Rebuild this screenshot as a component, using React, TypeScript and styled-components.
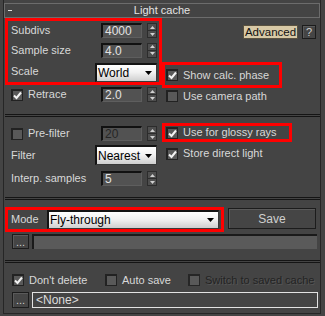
import React from 'react';
import styled, { createGlobalStyle } from 'styled-components';

const GlobalStyle = createGlobalStyle`
  html, body {
    margin: 0;
    padding: 0;
    background: #444444;
  }
  body {
    font-family: "Liberation Sans", Arial, sans-serif;
    font-size: 11px;
    color: #d8d8d8;
  }
`;

const Panel = styled.div`
  box-sizing: border-box;
  margin-left: 3px;
  width: 318px;
  height: 314px;
  padding-top: 3px;
  background: #444444;
  border: 1px solid #262626;
  border-top: none;
`;

const TitleBar = styled.div`
  box-sizing: border-box;
  height: 15px;
  border: 1px solid #6c6c6c;
  display: flex;
  align-items: center;
  padding-left: 3px;
`;

const Collapse = styled.span`
  width: 4px;
  height: 1px;
  background: #e0e0e0;
`;

const Title = styled.span`
  flex: 1;
  text-align: center;
  margin-right: 7px;
  line-height: 13px;
  color: #e4e4e4;
`;

const Section = styled.div`
  display: flex;
`;

const LeftCol = styled.div<{ $pad?: boolean }>`
  width: 157px;
  margin-left: 1px;
  display: flex;
  flex-direction: column;
  box-sizing: border-box;
  padding: ${p => (p.$pad ? '0 5px 0 6px' : '0')};
`;

const RightCol = styled.div`
  flex: 1;
  display: flex;
  flex-direction: column;
`;

const Highlight = styled.div<{ $w?: number; $h: number; $mt?: number; $single?: boolean }>`
  box-sizing: border-box;
  border: 3px solid #ff0000;
  height: ${p => p.$h}px;
  width: ${p => (p.$w ? `${p.$w}px` : 'auto')};
  margin-top: ${p => p.$mt ?? 0}px;
  display: flex;
  flex-direction: column;
  justify-content: ${p => (p.$single ? 'center' : 'flex-start')};
  padding: ${p => (p.$single ? '0 0 0 1px' : '0 2px 0 3px')};
`;

const Row = styled.div<{ $h: number; $mt?: number; $end?: boolean; $pl?: number; $pr?: number }>`
  display: flex;
  align-items: ${p => (p.$end ? 'flex-end' : 'center')};
  height: ${p => p.$h}px;
  margin-top: ${p => p.$mt ?? 0}px;
  padding-left: ${p => p.$pl ?? 0}px;
  padding-right: ${p => p.$pr ?? 0}px;
  flex-shrink: 0;
`;

const Label = styled.span<{ $w?: number }>`
  flex: ${p => (p.$w ? 'none' : 1)};
  width: ${p => (p.$w ? `${p.$w}px` : 'auto')};
  white-space: nowrap;
  line-height: 13px;
  align-self: center;
`;

const NumBox = styled.div<{ $disabled?: boolean }>`
  box-sizing: border-box;
  width: 41px;
  height: 15px;
  background: #525252;
  border-top: 2px solid #111111;
  border-left: 2px solid #111111;
  border-right: 1px solid #5e5e5e;
  border-bottom: 1px solid #5e5e5e;
  padding-left: 2px;
  line-height: 12px;
  color: ${p => (p.$disabled ? '#262626' : '#e2e2e2')};
  font-size: 12px;
`;

const Spinner = styled.div`
  box-sizing: border-box;
  width: 10px;
  height: 15px;
  margin-left: 5px;
  display: flex;
  flex-direction: column;
  background: #4e4e4e;
  border: 1px solid #2c2c2c;
`;

const SpinHalf = styled.div<{ $down?: boolean }>`
  flex: 1;
  display: flex;
  align-items: center;
  justify-content: center;
  border-top: ${p => (p.$down ? '1px solid #2c2c2c' : 'none')};
`;

const Select = styled.div<{ $w?: number; $h: number }>`
  box-sizing: border-box;
  width: ${p => (p.$w ? `${p.$w}px` : 'auto')};
  flex: ${p => (p.$w ? 'none' : 1)};
  height: ${p => p.$h}px;
  background: linear-gradient(#ffffff, #f2f2f2 45%, #cfcfcf);
  border-top: 2px solid #141414;
  border-left: 2px solid #141414;
  border-right: 1px solid #3a3a3a;
  border-bottom: 1px solid #3a3a3a;
  display: flex;
  align-items: center;
  padding: 0 4px 0 1px;
  color: #000;
  font-size: 12px;
`;

const SelectText = styled.span`
  flex: 1;
  white-space: nowrap;
`;

const CheckWrap = styled.label<{ $w?: number }>`
  display: flex;
  align-items: center;
  gap: 5px;
  width: ${p => (p.$w ? `${p.$w}px` : 'auto')};
  flex: none;
  white-space: nowrap;
`;

const Box = styled.span<{ $off?: boolean }>`
  box-sizing: border-box;
  width: 12px;
  height: 12px;
  flex: none;
  background: #595959;
  border: 2px solid ${p => (p.$off ? '#262626' : '#222222')};
  border-right-width: 1px;
  border-bottom-width: 1px;
  display: flex;
  align-items: center;
  justify-content: center;
`;

const CheckText = styled.span<{ $dim?: boolean }>`
  line-height: 13px;
  color: ${p => (p.$dim ? '#232323' : '#d8d8d8')};
  text-shadow: ${p => (p.$dim ? '1px 1px 0 #555555' : 'none')};
`;

const ButtonRow = styled.div`
  display: flex;
  justify-content: flex-end;
  gap: 4px;
  margin-top: 7px;
  padding-right: 4px;
  height: 14px;
`;

const Button = styled.div<{ $w: number; $h: number; $accent?: boolean }>`
  box-sizing: border-box;
  width: ${p => p.$w}px;
  height: ${p => p.$h}px;
  display: flex;
  align-items: center;
  justify-content: center;
  flex: none;
  font-size: ${p => (p.$accent ? '11.5px' : '11px')};
  background: ${p => (p.$accent ? '#d8c9a6' : '#454545')};
  color: ${p => (p.$accent ? '#111' : '#cfcfcf')};
  border: 1px solid ${p => (p.$accent ? '#5a5240' : '#1c1c1c')};
  box-shadow: ${p => (p.$accent ? 'none' : 'inset 1px 1px 0 #5a5a5a')};
`;

const Separator = styled.div<{ $mt: number }>`
  box-sizing: border-box;
  height: 3px;
  margin: ${p => p.$mt}px 0 0 1px;
  border-top: 1px solid #151515;
  border-bottom: 1px solid #151515;
`;

const WideRow = styled.div<{ $h: number; $mt: number; $gap?: number; $pr?: number }>`
  display: flex;
  align-items: center;
  height: ${p => p.$h}px;
  margin-top: ${p => p.$mt}px;
  padding: 0 ${p => p.$pr ?? 2}px 0 8px;
  gap: ${p => p.$gap ?? 3}px;
`;

const Field = styled.div<{ $outlined?: boolean }>`
  box-sizing: border-box;
  flex: 1;
  height: 100%;
  display: flex;
  align-items: center;
  padding-left: 3px;
  font-size: 12px;
  background: ${p => (p.$outlined ? '#444444' : '#5a5a5a')};
  border: ${p => (p.$outlined ? '1px solid #e2e2e2' : 'none')};
  border-top: ${p => (p.$outlined ? '1px solid #e2e2e2' : '2px solid #1a1a1a')};
  border-left: ${p => (p.$outlined ? '1px solid #e2e2e2' : '2px solid #1a1a1a')};
  color: #dcdcdc;
`;

const ModeRow = styled.div`
  display: flex;
  margin-top: 7px;
  margin-left: 1px;
`;

const SaveButton = styled(Button)`
  margin: 1px 0 0 4px;
  font-size: 12px;
`;

const UpArrow = () => (
  <svg width="5" height="3" viewBox="0 0 5 3">
    <path d="M0 3 L2.5 0 L5 3 Z" fill="#d0d0d0" />
  </svg>
);

const DownArrow = ({ color = '#d0d0d0', w = 5, h = 3 }: { color?: string; w?: number; h?: number }) => (
  <svg width={w} height={h} viewBox={`0 0 ${w} ${h}`}>
    <path d={`M0 0 L${w / 2} ${h} L${w} 0 Z`} fill={color} />
  </svg>
);

const Tick = () => (
  <svg width="9" height="9" viewBox="0 0 9 9">
    <path d="M1 4.5 L3.5 7 L8 1.5" stroke="#f2f2f2" strokeWidth="2" fill="none" />
  </svg>
);

const Spin: React.FC = () => (
  <Spinner>
    <SpinHalf><UpArrow /></SpinHalf>
    <SpinHalf $down><DownArrow /></SpinHalf>
  </Spinner>
);

const NumberField: React.FC<{ value: string; disabled?: boolean }> = ({ value, disabled }) => (
  <>
    <NumBox $disabled={disabled}>{value}</NumBox>
    <Spin />
  </>
);

const Check: React.FC<{ label: string; checked?: boolean; dim?: boolean; w?: number }> = ({ label, checked, dim, w }) => (
  <CheckWrap $w={w}>
    <Box $off={dim}>{checked && <Tick />}</Box>
    <CheckText $dim={dim}>{label}</CheckText>
  </CheckWrap>
);

const Dropdown: React.FC<{ value: string; w?: number; h: number }> = ({ value, w, h }) => (
  <Select $w={w} $h={h}>
    <SelectText>{value}</SelectText>
    <DownArrow color="#000" w={7} h={4} />
  </Select>
);

export default function App() {
  return (
    <>
      <GlobalStyle />
      <Panel>
        <TitleBar>
          <Collapse />
          <Title>Light cache</Title>
        </TitleBar>

        <Section>
          <LeftCol>
            <Highlight $h={67}>
              <Row $h={19}>
                <Label>Subdivs</Label>
                <NumberField value="4000" />
              </Row>
              <Row $h={20}>
                <Label>Sample size</Label>
                <NumberField value="4.0" />
              </Row>
              <Row $h={22} $end>
                <Label>Scale</Label>
                <Dropdown value="World" w={62} h={19} />
              </Row>
            </Highlight>
            <Row $h={15} $mt={2} $pl={6} $pr={5}>
              <Label><Check label="Retrace" checked /></Label>
              <NumberField value="2.0" />
            </Row>
          </LeftCol>
          <RightCol>
            <ButtonRow>
              <Button $w={55} $h={14} $accent>Advanced</Button>
              <Button $w={14} $h={14}>?</Button>
            </ButtonRow>
            <Highlight $w={120} $h={26} $mt={23} $single>
              <Check label="Show calc. phase" checked />
            </Highlight>
            <Row $h={12} $mt={2} $pl={4}>
              <Check label="Use camera path" />
            </Row>
          </RightCol>
        </Section>

        <Separator $mt={12} />

        <Section>
          <LeftCol $pad>
            <Row $h={15} $mt={9}>
              <Label><Check label="Pre-filter" /></Label>
              <NumberField value="20" disabled />
            </Row>
            <Row $h={20} $mt={4}>
              <Label>Filter</Label>
              <Dropdown value="Nearest" w={62} h={20} />
            </Row>
            <Row $h={15} $mt={6}>
              <Label>Interp. samples</Label>
              <NumberField value="5" />
            </Row>
          </LeftCol>
          <RightCol>
            <Highlight $w={130} $h={19} $mt={6} $single>
              <Check label="Use for glossy rays" checked />
            </Highlight>
            <Row $h={13} $mt={5} $pl={4}>
              <Check label="Store direct light" checked />
            </Row>
          </RightCol>
        </Section>

        <Separator $mt={11} />

        <ModeRow>
          <Highlight $w={219} $h={25}>
            <Row $h={19}>
              <Label $w={36}>Mode</Label>
              <Dropdown value="Fly-through" h={19} />
            </Row>
          </Highlight>
          <SaveButton $w={88} $h={21}>Save</SaveButton>
        </ModeRow>
        <WideRow $h={15} $mt={2} $pr={3}>
          <Button $w={17} $h={15}>...</Button>
          <Field />
        </WideRow>

        <Separator $mt={11} />

        <WideRow $h={12} $mt={11} $gap={0}>
          <Check label="Don't delete" checked w={93} />
          <Check label="Auto save" w={83} />
          <Check label="Switch to saved cache" dim />
        </WideRow>
        <WideRow $h={16} $mt={6}>
          <Button $w={17} $h={16}>...</Button>
          <Field $outlined>&lt;None&gt;</Field>
        </WideRow>
      </Panel>
    </>
  );
}
